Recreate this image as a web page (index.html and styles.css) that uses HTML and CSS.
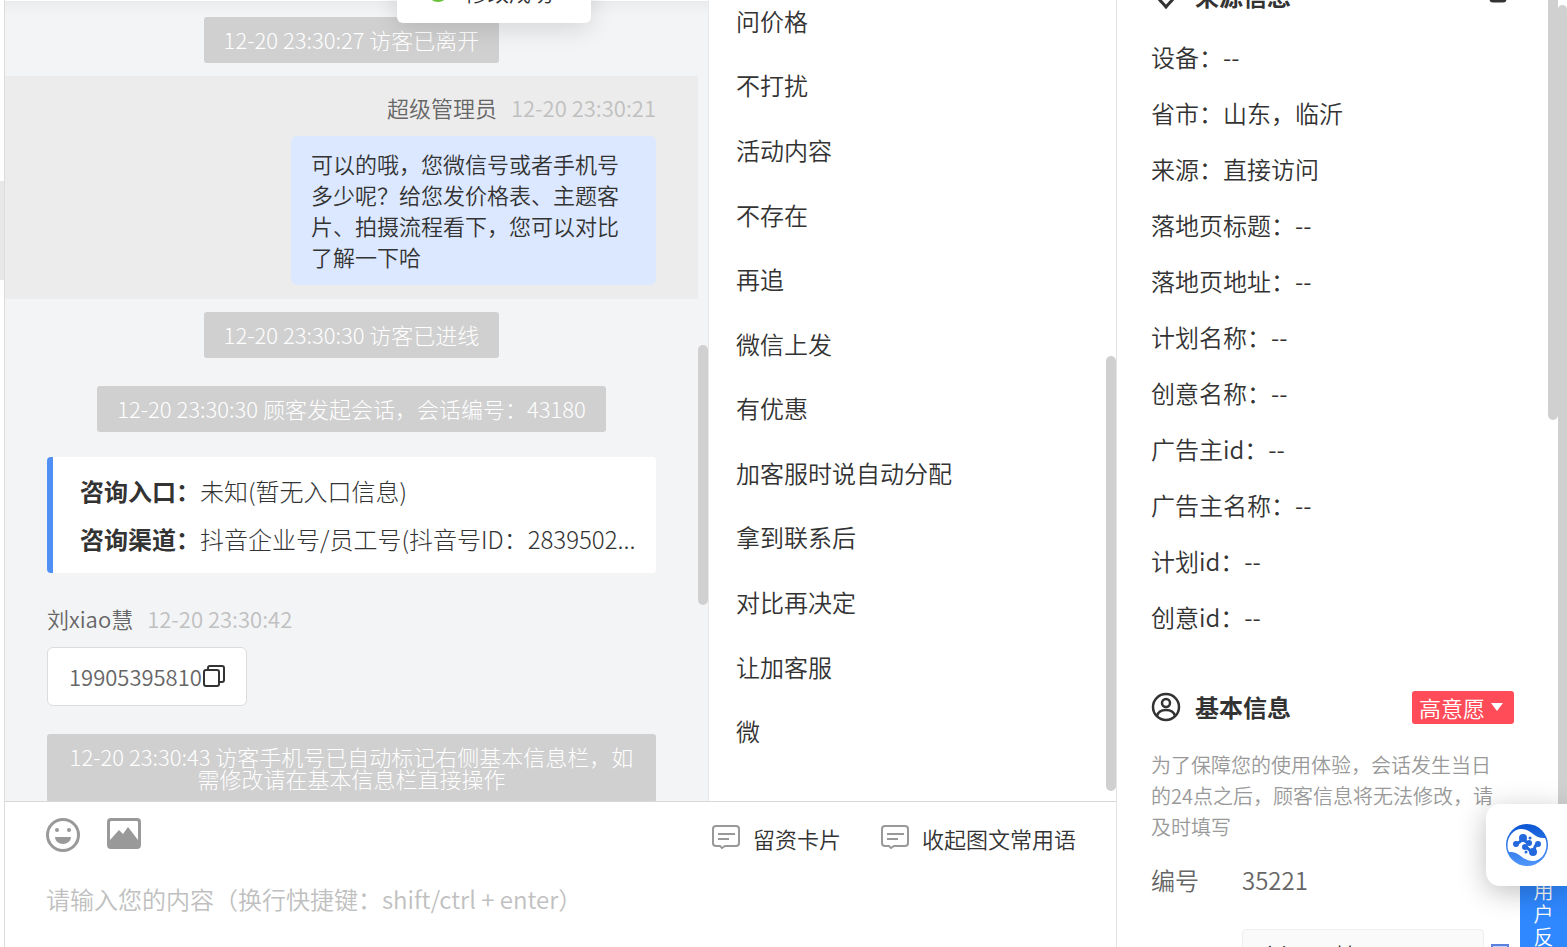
FILE: index.html
```html
<!DOCTYPE html>
<html lang="zh-CN">
<head>
<meta charset="utf-8">
<title>客服会话</title>
<link rel="stylesheet" href="styles.css">
</head>
<body>
<div class="app">
  <div class="rail"><span class="rail-handle"></span></div>
  <main class="workspace">
    <div class="panes">
      <section class="chat">
        <p class="pill">12-20 23:30:27 访客已离开</p>
        <div class="highlight">
          <div class="meta meta-right"><span>超级管理员</span><time>12-20 23:30:21</time></div>
          <p class="bubble bubble-own">可以的哦，您微信号或者手机号多少呢？给您发价格表、主题客片、拍摄流程看下，您可以对比了解一下哈</p>
        </div>
        <p class="pill">12-20 23:30:30 访客已进线</p>
        <p class="pill pill-session">12-20 23:30:30 顾客发起会话，会话编号：43180</p>
        <div class="source-card">
          <p><strong>咨询入口：</strong>未知(暂无入口信息)</p>
          <p><strong>咨询渠道：</strong>抖音企业号/员工号(抖音号ID：2839502...</p>
        </div>
        <div class="visitor">
          <div class="meta"><span>刘xiao慧</span><time>12-20 23:30:42</time></div>
          <div class="bubble bubble-visitor"><span>19905395810</span><button class="icon-button" type="button" aria-label="复制"><svg width="24" height="24" viewBox="0 0 24 24" fill="none" stroke="#333" stroke-width="2"><rect x="2" y="6" width="15" height="16" rx="2"/><path d="M6 6V4a2 2 0 0 1 2-2h12a2 2 0 0 1 2 2v12a2 2 0 0 1-2 2h-3"/></svg></button></div>
        </div>
        <p class="pill pill-wide">12-20 23:30:43 访客手机号已自动标记右侧基本信息栏，如需修改请在基本信息栏直接操作</p>
        <span class="thumb thumb-chat"></span>
      </section>
      <section class="phrases">
        <ul>
          <li>问价格</li><li>不打扰</li><li>活动内容</li><li>不存在</li><li>再追</li><li>微信上发</li>
          <li>有优惠</li><li>加客服时说自动分配</li><li>拿到联系后</li><li>对比再决定</li><li>让加客服</li><li>微</li>
        </ul>
        <span class="thumb thumb-phrases"></span>
      </section>
    </div>
    <section class="composer">
      <div class="tools">
        <button class="icon-button" type="button" aria-label="表情"><svg width="34" height="34" viewBox="0 0 34 34"><circle cx="17" cy="17" r="15.500" fill="none" stroke="#999" stroke-width="3"/><circle cx="11" cy="12" r="2" fill="#999"/><circle cx="23" cy="12" r="2" fill="#999"/><path d="M9 19h16a8 7 0 0 1-16 0z" fill="#999"/></svg></button>
        <button class="icon-button" type="button" aria-label="图片"><svg width="34" height="34" viewBox="0 0 34 34"><path fill="#999" fill-rule="evenodd" d="M4 0h26a4 4 0 0 1 4 4v23a4 4 0 0 1-4 4H4a4 4 0 0 1-4-4V4a4 4 0 0 1 4-4zM3 4v18l9-10 4 4 5-7 10 13V4L30 3H4z"/></svg></button>
        <div class="tool-links">
          <button class="text-button" type="button"><svg width="28" height="26" viewBox="0 0 28 26" fill="none" stroke="#999" stroke-width="2"><path d="M4 1h20a3 3 0 0 1 3 3v14a3 3 0 0 1-3 3H13l-3 2-2-2H4a3 3 0 0 1-3-3V4a3 3 0 0 1 3-3zM6 9h17M6 14h11"/></svg>留资卡片</button>
          <button class="text-button" type="button"><svg width="28" height="26" viewBox="0 0 28 26" fill="none" stroke="#999" stroke-width="2"><path d="M4 1h20a3 3 0 0 1 3 3v14a3 3 0 0 1-3 3H13l-3 2-2-2H4a3 3 0 0 1-3-3V4a3 3 0 0 1 3-3zM6 9h17M6 14h11"/></svg>收起图文常用语</button>
        </div>
      </div>
      <textarea class="message" aria-label="消息内容" placeholder="请输入您的内容（换行快捷键：shift/ctrl + enter）"></textarea>
    </section>
  </main>
  <aside class="details">
    <div class="heading heading-source">
      <svg width="30" height="30" viewBox="0 0 30 30" fill="none" stroke="#333" stroke-width="3"><path d="M15 28C9 21 4 17 4 11a11 9 0 0 1 22 0c0 6-5 10-11 17z"/><circle cx="15" cy="11" r="4"/></svg>
      <h2>来源信息</h2>
      <button class="icon-button edit-source" type="button" aria-label="编辑来源"><svg width="18" height="22" viewBox="0 0 18 22" fill="none" stroke="#333" stroke-width="3"><rect x="2" y="2" width="14" height="18" rx="2"/></svg></button>
    </div>
    <dl class="source-list">
      <div><dt>设备：</dt><dd>--</dd></div>
      <div><dt>省市：</dt><dd>山东，临沂</dd></div>
      <div><dt>来源：</dt><dd>直接访问</dd></div>
      <div><dt>落地页标题：</dt><dd>--</dd></div>
      <div><dt>落地页地址：</dt><dd>--</dd></div>
      <div><dt>计划名称：</dt><dd>--</dd></div>
      <div><dt>创意名称：</dt><dd>--</dd></div>
      <div><dt>广告主id：</dt><dd>--</dd></div>
      <div><dt>广告主名称：</dt><dd>--</dd></div>
      <div><dt>计划id：</dt><dd>--</dd></div>
      <div><dt>创意id：</dt><dd>--</dd></div>
    </dl>
    <div class="heading">
      <svg width="30" height="30" viewBox="0 0 30 30" fill="none" stroke="#333" stroke-width="2.500"><circle cx="15" cy="15" r="13"/><circle cx="15" cy="11" r="4"/><path d="M6 24c1-4 4-6 9-6s8 2 9 6"/></svg>
      <h2>基本信息</h2>
      <button class="intent" type="button">高意愿<svg width="12" height="8" viewBox="0 0 12 8"><path d="M0 0h12L6 8z" fill="#fff"/></svg></button>
    </div>
    <p class="note">为了保障您的使用体验，会话发生当日的24点之后，顾客信息将无法修改，请及时填写</p>
    <div class="field"><span>编号</span><span>35221</span></div>
    <div class="field field-name">
      <input type="text" aria-label="姓名" value="刘xiao慧">
      <button class="icon-button copy-name" type="button" aria-label="复制姓名"><svg width="20" height="24" viewBox="0 0 20 24" fill="#c5d5f5" stroke="#5b7fdd" stroke-width="2"><path d="M1 23V4h16v19"/></svg></button>
    </div>
    <span class="thumb thumb-details"></span>
    <span class="thumb thumb-page"></span>
  </aside>
</div>
<div class="toast" role="status">
  <svg width="22" height="22" viewBox="0 0 22 22"><circle cx="11" cy="11" r="11" fill="#67c23a"/><path d="M6 11l4 4 6-8" fill="none" stroke="#fff" stroke-width="2"/></svg>
  <span>修改成功</span>
</div>
<button class="feedback" type="button">用户反馈</button>
<button class="assistant" type="button" aria-label="智能助手">
  <svg width="42" height="42" viewBox="0 0 42 42">
    <defs><linearGradient id="blue" x1="0" y1="0" x2="0" y2="1"><stop offset="0" stop-color="#0b55d4"/><stop offset="1" stop-color="#4f97fb"/></linearGradient></defs>
    <circle cx="21" cy="21" r="21" fill="url(#blue)"/>
    <path d="M1.500 21C1.500 12 8 5 15 5c11 0 13 10 24 9 1 2 1.500 4 1.500 7C40.500 30 34 37 27 37 16 37 14 27 3 28c-1-2-1.500-4-1.500-7z" fill="#fff"/>
    <path d="M11 19c4 0 4-3 6-6 2 4 3 6 6 6M19 23c4 0 4 5 8 5 2-3 1-7 5-8" fill="none" stroke="#2369dd" stroke-width="3"/>
    <g fill="#2369dd"><circle cx="10" cy="20" r="3"/><circle cx="17" cy="14" r="4"/><circle cx="23" cy="19" r="3"/><circle cx="19" cy="23" r="3"/><circle cx="27" cy="28" r="4"/><circle cx="32" cy="20" r="3"/><circle cx="24" cy="14" r="1.500"/><circle cx="20" cy="28" r="1.500"/></g>
  </svg>
</button>
</body>
</html>
```

FILE: styles.css
```css
* { box-sizing: border-box; }
body, p, h2, ul, dl, dd { margin: 0; }
body {
  height: 100vh;
  overflow: hidden;
  background: #fff;
  color: #333;
  font-family: "Noto Sans CJK SC", sans-serif;
  font-size: 24px;
  font-weight: 350;
}
button, input, textarea {
  padding: 0;
  border: 0;
  background: none;
  color: inherit;
  font: inherit;
}
strong { font-weight: 700; }
svg { display: block; flex: none; }
.icon-button { display: flex; }

.app { display: grid; grid-template-columns: 5px minmax(0, 1112fr) minmax(0, 450fr); height: 100%; }
.rail { padding-top: 181px; border-right: 1px solid #dcdcdc; }
.rail-handle { display: block; height: 99px; background: #e8e8e8; }
.workspace { min-height: 0; display: flex; flex-direction: column; border-right: 1px solid #e4e4e4; }
.panes { flex: 1; min-height: 0; display: grid; grid-template: minmax(0, 1fr) / minmax(0, 704fr) minmax(0, 407fr); }
.thumb { position: absolute; border-radius: 5px; background: #d0d0d0; }

.chat {
  position: relative;
  overflow: hidden;
  display: flex;
  flex-direction: column;
  padding-top: 16px;
  border-top: 1px solid #fff;
  border-right: 1px solid #e8e8e8;
  background: linear-gradient(#e9ebed, #f3f4f6 14px);
  font-size: 22px;
}
.chat > * { flex: none; }
.thumb-chat { top: 344px; right: 0; width: 10px; height: 260px; }
.pill {
  align-self: center;
  margin-right: 10px;
  padding: 11px 20px 13px;
  border-radius: 3px;
  background: #d0d0d0;
  color: #fff;
  font-weight: 300;
  line-height: 22px;
  text-align: center;
}
.pill-session { margin-top: 28px; }
.pill-wide { align-self: stretch; margin: 28px 52px 0 42px; padding: 11px 18px 13px; }
.highlight {
  display: flex;
  flex-direction: column;
  align-items: flex-end;
  gap: 12px;
  margin: 13px 10px 13px 0;
  padding: 16px 42px 14px;
  background: #ececec;
}
.meta { display: flex; gap: 14px; padding-bottom: 2px; color: #666; line-height: 30px; }
.meta time { color: #c0c0c0; }
.bubble { border-radius: 6px; }
.bubble-own { width: 365px; padding: 12px 20px 13px; background: #dce8ff; line-height: 31px; }
.source-card {
  margin: 25px 52px 0 42px;
  padding: 10px 16px 10px 27px;
  border-left: 6px solid #5090f5;
  border-radius: 4px;
  background: #fff;
  font-size: 24px;
  font-weight: 300;
  line-height: 48px;
}
.source-card p { overflow: hidden; white-space: nowrap; text-overflow: ellipsis; }
.visitor { display: flex; flex-direction: column; align-items: flex-start; gap: 12px; margin: 30px 0 0 42px; }
.bubble-visitor {
  display: flex;
  align-items: center;
  padding: 12px 20px 13px 21px;
  border: 1px solid #dcdcdc;
  background: #fff;
  color: #666;
  line-height: 32px;
}

.phrases { position: relative; overflow: hidden; display: flex; }
.phrases ul {
  flex: 1;
  display: grid;
  grid-template-rows: repeat(12, 1fr);
  align-items: center;
  margin: -12px 0 38px;
  padding-left: 27px;
  list-style: none;
}
.thumb-phrases { right: 0; top: 356px; width: 10px; height: 435px; }

.composer { flex: none; display: flex; flex-direction: column; height: 146px; padding: 16px 40px 0 41px; border-top: 1px solid #d8d8d8; }
.tools { display: flex; align-items: center; gap: 27px; height: 34px; }
.tool-links { display: flex; gap: 40px; margin-left: auto; padding-top: 6px; font-size: 22px; }
.text-button { display: flex; align-items: center; gap: 13px; line-height: 32px; }
.message { flex: 1; margin-top: 29px; resize: none; overflow: hidden; outline: 0; line-height: 36px; }
.message::placeholder { color: #c0c0c0; }

.details { position: relative; overflow: hidden; padding-left: 34px; }
.heading { display: flex; align-items: center; gap: 14px; height: 40px; padding-right: 53px; }
.heading h2 { font-size: 24px; font-weight: 700; line-height: 36px; }
.heading button { margin-left: auto; }
.heading-source { margin-top: -24px; padding-right: 60px; }
.heading-source > svg { margin-bottom: 4px; }
.edit-source { margin-bottom: 8px; }
.source-list { margin-top: 13px; line-height: 56px; }
.source-list div { display: flex; }
.source-list + .heading { margin-top: 42px; }
.intent {
  display: flex;
  align-items: center;
  gap: 6px;
  height: 33px;
  padding: 0 11px 0 7px;
  border-radius: 3px;
  background: #ff4c58;
  color: #fff;
  font-size: 22px;
}
.note { width: 357px; margin-top: 22px; color: #999; font-size: 20px; line-height: 31px; }
.field { display: grid; grid-template-columns: 91px 242px auto; justify-content: start; margin-top: 18px; color: #666; line-height: 40px; }
.field-name { margin-top: 29px; }
.field input { grid-column: 2; height: 52px; padding: 0 20px; border: 1px solid #eee; border-radius: 4px; background: #fafafa; color: #333; }
.copy-name { margin: 12px 0 0 7px; }
.thumb-details { top: -10px; right: 9px; width: 10px; height: 430px; }
.thumb-page { top: 5px; right: 0; width: 9px; height: 860px; }

.toast {
  position: absolute;
  top: -37px;
  left: 397px;
  display: flex;
  align-items: center;
  gap: 16px;
  height: 60px;
  padding: 0 38px 5px 30px;
  border-radius: 6px;
  background: #fff;
  box-shadow: 0 6px 24px rgba(0, 0, 0, 0.12);
  font-size: 22px;
}
.feedback {
  position: absolute;
  top: 872px;
  right: 0;
  width: 47px;
  height: 110px;
  padding: 7px 13px 11px;
  background: #2f88ff;
  color: #fff;
  font-size: 20px;
  line-height: 23px;
}
.assistant {
  position: absolute;
  top: 804px;
  right: 0;
  width: 81px;
  height: 82px;
  padding: 0 20px;
  border-radius: 14px 0 0 14px;
  background: #fff;
  box-shadow: 0 6px 28px rgba(0, 0, 0, 0.25);
}
```
